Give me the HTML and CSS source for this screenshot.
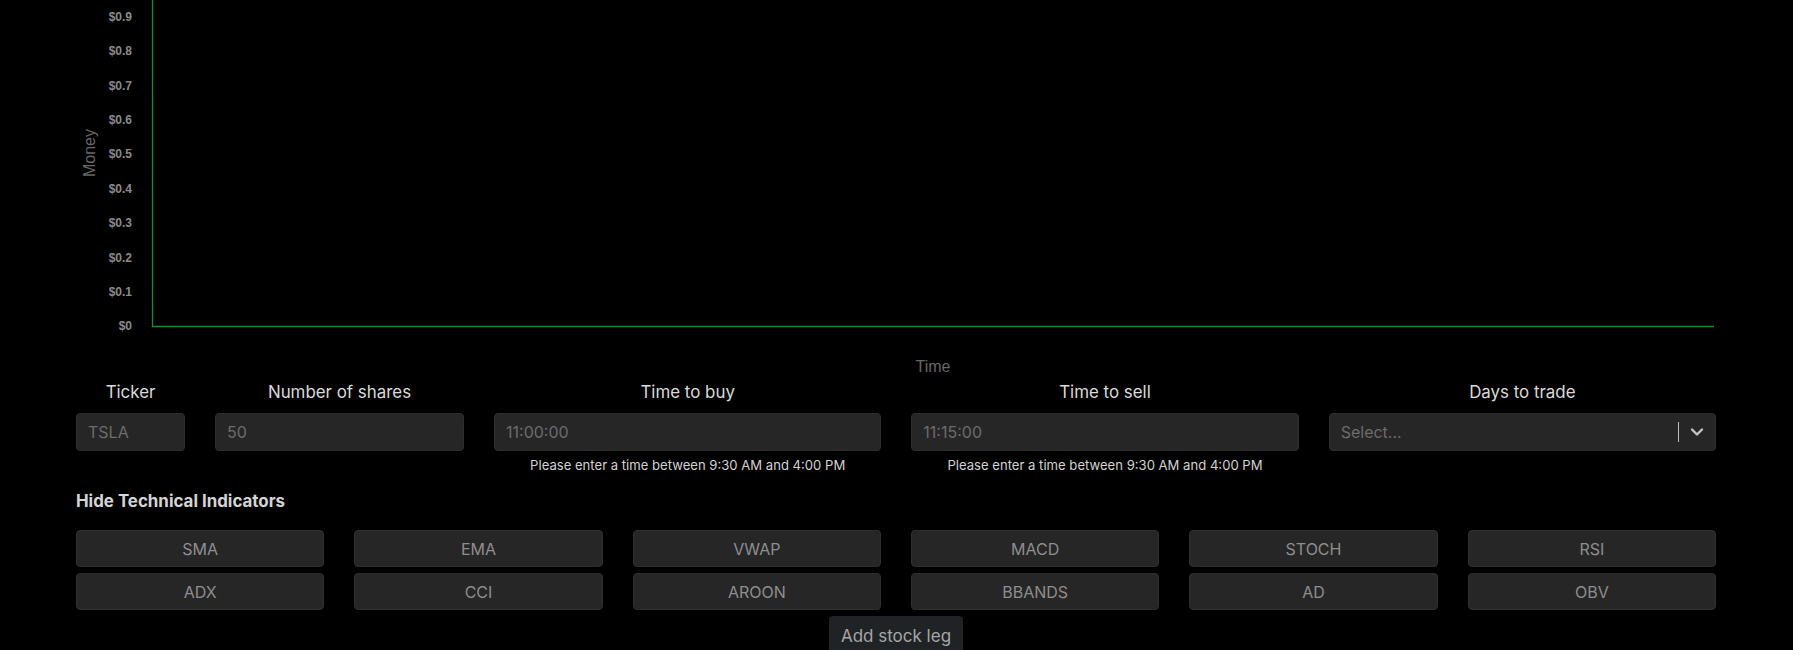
FILE: index.html
```html
<!DOCTYPE html>
<html lang="en">
<head>
<meta charset="utf-8">
<title>Stock leg</title>
<link rel="stylesheet" href="styles.css">
</head>
<body>
<main class="page">
  <svg class="chart" width="1640" height="380" viewBox="0 0 1640 380">
    <g class="ticks">
      <text x="56" y="20.7">$0.9</text>
      <text x="56" y="55.1">$0.8</text>
      <text x="56" y="89.5">$0.7</text>
      <text x="56" y="123.9">$0.6</text>
      <text x="56" y="158.3">$0.5</text>
      <text x="56" y="192.7">$0.4</text>
      <text x="56" y="227.1">$0.3</text>
      <text x="56" y="261.5">$0.2</text>
      <text x="56" y="295.9">$0.1</text>
      <text x="56" y="330.3">$0</text>
    </g>
    <path class="axis" d="M76.5 -5 V326.5 H1638"/>
    <text class="axis-title" transform="translate(18.5,153) rotate(-90)">Money</text>
    <text class="axis-title" x="857" y="372.4">Time</text>
  </svg>

  <section class="form-row">
    <div class="field">
      <label class="field-label" for="ticker">Ticker</label>
      <input class="text-input" id="ticker" placeholder="TSLA">
    </div>
    <div class="field">
      <label class="field-label" for="shares">Number of shares</label>
      <input class="text-input" id="shares" placeholder="50">
    </div>
    <div class="field">
      <label class="field-label" for="buy">Time to buy</label>
      <input class="text-input" id="buy" placeholder="11:00:00">
      <p class="hint">Please enter a time between 9:30 AM and 4:00 PM</p>
    </div>
    <div class="field">
      <label class="field-label" for="sell">Time to sell</label>
      <input class="text-input" id="sell" placeholder="11:15:00">
      <p class="hint">Please enter a time between 9:30 AM and 4:00 PM</p>
    </div>
    <div class="field">
      <span class="field-label">Days to trade</span>
      <div class="select">
        <span class="select-placeholder">Select...</span>
        <span class="select-sep"></span>
        <span class="select-arrow">
          <svg width="14" height="10" viewBox="0 0 14 10"><path d="M2 2.5 L7 7.5 L12 2.5" fill="none" stroke="#c4c4c4" stroke-width="2.4" stroke-linecap="round" stroke-linejoin="round"/></svg>
        </span>
      </div>
    </div>
  </section>

  <h2 class="section-title">Hide Technical Indicators</h2>

  <section class="indicators">
    <button class="ind">SMA</button>
    <button class="ind">EMA</button>
    <button class="ind">VWAP</button>
    <button class="ind">MACD</button>
    <button class="ind">STOCH</button>
    <button class="ind">RSI</button>
    <button class="ind">ADX</button>
    <button class="ind">CCI</button>
    <button class="ind">AROON</button>
    <button class="ind">BBANDS</button>
    <button class="ind">AD</button>
    <button class="ind">OBV</button>
  </section>

  <div class="actions">
    <button class="add-leg">Add stock leg</button>
  </div>
</main>
</body>
</html>
```

FILE: styles.css
```css
* { box-sizing: border-box; }

html, body {
  margin: 0;
  background: #000;
  overflow: hidden;
}

body {
  font-family: "Inter", "DejaVu Sans", sans-serif;
  color: #d6d6d6;
}

.page {
  width: 1640px;
  margin: 0 0 0 76px;
}

.chart {
  display: block;
}

.ticks text {
  font-family: "Liberation Sans", Arial, sans-serif;
  font-weight: bold;
  font-size: 12px;
  fill: #8a8a8a;
  text-anchor: end;
}

.axis {
  fill: none;
  stroke: #1b8a38;
  stroke-width: 1.3;
}

.axis-title {
  font-family: "Liberation Sans", Arial, sans-serif;
  font-size: 16px;
  fill: #666;
  text-anchor: middle;
}

.form-row {
  display: grid;
  grid-template-columns: 109px 249px 1fr 1fr 1fr;
  column-gap: 30px;
  align-items: start;
}

.field {
  display: flex;
  flex-direction: column;
  align-items: stretch;
}

.field-label {
  display: block;
  text-align: center;
  font-size: 16.9px;
  line-height: 24px;
  color: #dadada;
  margin-bottom: 9px;
}

.text-input {
  height: 38px;
  width: 100%;
  background: #262626;
  border: 1px solid #2f2f2f;
  border-radius: 4px;
  padding: 0 11px;
  font-family: inherit;
  font-size: 16px;
  color: #6c6c6c;
  outline: none;
}

.text-input::placeholder {
  color: #6c6c6c;
  opacity: 1;
}

.hint {
  margin: 5px 0 0;
  text-align: center;
  font-size: 13.1px;
  line-height: 18px;
  color: #d2d2d2;
}

.select {
  height: 38px;
  background: #262626;
  border: 1px solid #2f2f2f;
  border-radius: 4px;
  display: flex;
  align-items: center;
  padding-left: 11px;
}

.select-placeholder {
  flex: 1;
  font-size: 16px;
  color: #6c6c6c;
}

.select-sep {
  width: 1px;
  height: 20px;
  background: #bdbdbd;
}

.select-arrow {
  width: 36px;
  display: flex;
  justify-content: center;
  align-items: center;
}

.select-arrow svg {
  display: block;
}

.section-title {
  margin: 16px 0 18px;
  font-size: 16.9px;
  line-height: 22px;
  font-weight: 700;
  color: #d4d4d4;
}

.indicators {
  display: grid;
  grid-template-columns: repeat(6, 1fr);
  column-gap: 30px;
  row-gap: 6px;
}

.ind {
  height: 37px;
  background: #262626;
  border: 1px solid #2f2f2f;
  border-radius: 4px;
  font-family: inherit;
  font-size: 16px;
  color: #8e8e8e;
  padding: 0;
}

.actions {
  display: flex;
  justify-content: center;
  margin-top: 6px;
}

.add-leg {
  height: 40px;
  padding: 0 12px;
  background: #202325;
  border: none;
  border-radius: 4px;
  font-family: inherit;
  font-size: 17px;
  color: #a6a6a6;
}
```
